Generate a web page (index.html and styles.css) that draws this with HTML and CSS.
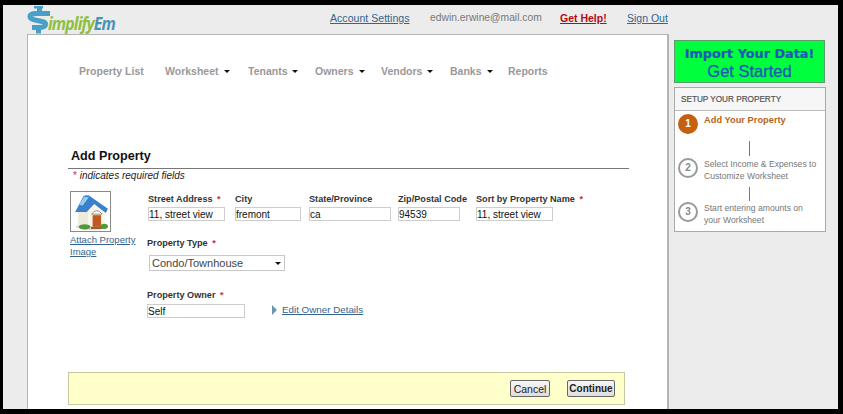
FILE: index.html
```html
<!DOCTYPE html>
<html lang="en">
<head>
<meta charset="utf-8">
<title>SimplifyEm - Add Property</title>
<link rel="stylesheet" href="styles.css">
</head>
<body>
<div class="frame">
  <header class="top">
    <div class="logo">
      <svg class="logo-mark" width="24" height="29" viewBox="0 0 24 29">
        <path d="M23 8.500 H9 Q3 8.500 3 11.500 Q3 14 8 15 L15 16.500 Q19.500 17.500 18.500 20 Q17.500 22.500 12 22.500 H5" fill="none" stroke="#4a9fc9" stroke-width="5"/>
        <rect x="10" y="1" width="5" height="7" fill="#4a9fc9"/>
        <rect x="9" y="23" width="5" height="5.500" fill="#4a9fc9"/>
        <rect x="7" y="1" width="9" height="2.500" fill="#4a9fc9"/>
      </svg>
      <span class="logo-text"><span class="logo-green">implify</span><span class="logo-blue">Em</span></span>
    </div>
    <nav class="account">
      <a class="link account-settings" href="#">Account Settings</a>
      <span class="email">edwin.erwine@mail.com</span>
      <a class="help" href="#">Get Help!</a>
      <a class="link signout" href="#">Sign Out</a>
    </nav>
  </header>
  <div class="columns">
    <main class="main">
      <ul class="menu">
        <li class="m-property">Property List</li>
        <li class="m-worksheet">Worksheet<i class="caret"></i></li>
        <li class="m-tenants">Tenants<i class="caret"></i></li>
        <li class="m-owners">Owners<i class="caret"></i></li>
        <li class="m-vendors">Vendors<i class="caret"></i></li>
        <li class="m-banks">Banks<i class="caret"></i></li>
        <li>Reports</li>
      </ul>
      <h1 class="title">Add Property</h1>
      <p class="required"><span class="star">*</span> indicates required fields</p>
      <form class="form">
        <div class="image-col">
          <div class="house-box">
            <svg width="36" height="36" viewBox="0 0 34 34">
              <ellipse cx="18" cy="31" rx="15" ry="3" fill="#d5d9d5"/>
              <path d="M5 15 L20 7 L30 16 V31 H5 Z" fill="#f8f5e8"/>
              <path d="M5 15 L14 15 L14 31 H5 Z" fill="#eeeadb"/>
              <path d="M2 17 L10 2 Q12 0.500 15 1.500 L33 14 L31 18 L20 9.500 L13 17 Z" fill="#3a80cc"/>
              <path d="M6 10 L10.500 2.500 L15 3 L9 11 Z" fill="#9acbf2"/>
              <rect x="18.500" y="20" width="8" height="11" fill="#c2581f"/>
              <rect x="17" y="31" width="11" height="2" fill="#9a5a30"/>
              <path d="M17.500 19 Q22.500 12.500 27.500 19 Z" fill="#fff" stroke="#8a7a60" stroke-width=".8"/>
              <ellipse cx="11" cy="31" rx="5.500" ry="2.500" fill="#4f9a35"/>
              <ellipse cx="29.500" cy="30.500" rx="3.500" ry="2.500" fill="#4f9a35"/>
            </svg>
          </div>
          <a class="link attach" href="#">Attach Property Image</a>
        </div>
        <div class="fields">
          <div class="row">
            <label class="field f-street"><span class="lab">Street Address <span class="star">*</span></span><input class="inp w-street" type="text" value="11, street view"></label>
            <label class="field f-city"><span class="lab">City</span><input class="inp w-city" type="text" value="fremont"></label>
            <label class="field f-state"><span class="lab">State/Province</span><input class="inp w-state" type="text" value="ca"></label>
            <label class="field f-zip"><span class="lab">Zip/Postal Code</span><input class="inp w-zip" type="text" value="94539"></label>
            <label class="field f-sort"><span class="lab">Sort by Property Name <span class="star">*</span></span><input class="inp w-sort" type="text" value="11, street view"></label>
          </div>
          <div class="type-block">
            <span class="lab">Property Type <span class="star">*</span></span>
            <div class="fake-select"><span>Condo/Townhouse</span><i class="caret sel-caret"></i></div>
          </div>
          <div class="owner-block">
            <span class="lab">Property Owner <span class="star">*</span></span>
            <div class="owner-row">
              <input class="inp w-owner" type="text" value="Self">
              <i class="tri"></i>
              <a class="link edit" href="#">Edit Owner Details</a>
            </div>
          </div>
        </div>
      </form>
      <div class="actions">
        <button class="btn btn-cancel" type="button">Cancel</button>
        <button class="btn btn-continue" type="button">Continue</button>
      </div>
    </main>
    <aside class="side">
      <div class="import">
        <div class="import-1">Import Your Data!</div>
        <div class="import-2">Get Started</div>
      </div>
      <section class="setup">
        <h2 class="setup-head">SETUP YOUR PROPERTY</h2>
        <div class="step step-1"><span class="num num-on">1</span><span class="step-on">Add Your Property</span></div>
        <div class="conn conn-1"></div>
        <div class="step step-2"><span class="num">2</span><span class="step-text">Select Income &amp; Expenses to Customize Worksheet</span></div>
        <div class="conn conn-2"></div>
        <div class="step step-3"><span class="num">3</span><span class="step-text">Start entering amounts on your Worksheet</span></div>
      </section>
    </aside>
  </div>
</div>
</body>
</html>
```
FILE: styles.css
```css
* { box-sizing: border-box; }
html, body { margin: 0; padding: 0; height: 414px; overflow: hidden; background: #000; }
body { padding: 5px 5px 5px 3px; font-family: "Liberation Sans", Arial, sans-serif; }
a { text-decoration: underline; }
.frame { height: 404px; background: #ececec; display: flex; flex-direction: column; overflow: hidden; }

.top { height: 29px; flex: none; display: flex; padding-left: 24px; }
.logo { display: flex; align-items: flex-start; width: 303px; }
.logo-mark { display: block; flex: none; }
.logo-text { font: italic bold 18px/20px "Open Sans", sans-serif; letter-spacing: -1px; margin: 8px 0 0 -3px; transform: scaleX(.88); transform-origin: left center; }
.logo-green { color: #8fbf3d; }
.logo-blue { color: #4a93b8; }
.account { display: flex; font-size: 10.600px; line-height: 14px; padding-top: 6px; }
.link { color: #34658f; }
.account-settings { width: 100px; }
.email { color: #777; width: 130px; font-size: 10.300px; }
.help { color: #b30b16; font-weight: bold; width: 67px; font-size: 10.500px; }
.signout { font-size: 10.500px; }

.columns { flex: 1; display: flex; min-height: 0; padding-left: 24px; }
.main { width: 642px; flex: none; background: #fff; border: 1px solid #b4b4b4; border-width: 1px 2px 0 1px; padding: 29px 0 0 40px; }
.menu { list-style: none; margin: 0; padding: 0 0 0 11px; display: flex; font-size: 10.500px; font-weight: bold; line-height: 14px; color: #999; }
.menu li { display: flex; align-items: center; white-space: nowrap; }
.m-property { width: 86px; }
.m-worksheet { width: 83px; }
.m-tenants { width: 67px; }
.m-owners { width: 66px; }
.m-vendors { width: 69px; }
.m-banks { width: 58px; }
.caret { display: inline-block; width: 0; height: 0; border: 3px solid transparent; border-top: 3.500px solid #111; border-bottom: 0; margin-left: 5px; }

.title { margin: 70px 0 0; padding: 0 0 3px 3px; font-size: 12.600px; line-height: 17px; font-weight: bold; color: #111; border-bottom: 1px solid #777; width: 561px; }
.required { margin: 0 0 0 5px; font-size: 10px; line-height: 14px; font-style: italic; color: #222; }
.star { color: #c33; font-style: normal; margin-left: 2px; }
.required .star { margin-left: 0; }

.form { display: flex; margin: 8px 0 0 2px; height: 181px; }
.image-col { width: 77px; flex: none; font-size: 9.500px; line-height: 12px; }
.house-box { width: 41px; height: 41px; border: 1px solid #8a8a8a; background: #fff; display: flex; align-items: center; justify-content: center; }
.attach { display: block; width: 72px; margin-top: 2px; }
.fields { padding-top: 1px; }
.row { display: flex; padding-left: 1px; }
.field { display: flex; flex-direction: column; }
.f-street { width: 87px; }
.f-city { width: 74px; }
.f-state { width: 89px; }
.f-zip { width: 78px; }
.lab { display: block; font-size: 9.150px; font-weight: bold; line-height: 14px; color: #333; white-space: nowrap; }
.inp { display: block; height: 14px; padding: 0; border: 1px solid #cdcdcd; background: #fff; font: 10px/12px "Liberation Sans", Arial, sans-serif; color: #111; margin-top: 1px; outline: 0; }
.w-street { width: 77px; }
.w-city { width: 66px; }
.w-state { width: 82px; }
.w-zip { width: 62px; }
.w-sort { width: 77px; }
.w-owner { width: 98px; margin-top: 2px; }

.type-block { margin-top: 15px; }
.fake-select { width: 136px; height: 16px; margin: 5px 0 0 2px; border: 1px solid #c8c8c8; background: #fff; display: flex; align-items: center; justify-content: space-between; padding: 0 3px 0 2px; font-size: 11px; color: #444; }
.sel-caret { margin: 0; }
.owner-block { margin-top: 17px; }
.owner-row { display: flex; align-items: center; }
.tri { width: 0; height: 0; border: 5px solid transparent; border-left: 5px solid #6f94b0; border-right: 0; margin-left: 27px; }
.edit { margin-left: 5px; font-size: 9.800px; line-height: 14px; }

.actions { width: 557px; height: 33px; background: #ffc; border: 1px solid #c8c8a0; display: flex; justify-content: flex-end; align-items: center; padding-right: 9px; gap: 17px; }
.btn { height: 17px; padding: 0; border: 1px solid #666; border-radius: 2px; background: linear-gradient(#f6f6f6, #dedede); font: 10.500px/14px "Liberation Sans", Arial, sans-serif; color: #222; }
.btn-cancel { width: 40px; }
.btn-continue { width: 48px; font-weight: bold; font-size: 10px; }

.side { width: 152px; margin-left: 5px; padding-top: 6px; flex: none; }
.import { height: 43px; width: 151px; background: #00ff3c; border: 1px solid #5c9c6c; text-align: center; color: #1c58b8; padding-top: 4px; }
.import-1 { font: bold 12.800px/17px "DejaVu Sans", sans-serif; white-space: nowrap; -webkit-text-stroke: .2px #1c58b8; }
.import-2 { font-size: 16.500px; line-height: 19px; -webkit-text-stroke: .3px #1c58b8; }
.setup { margin-top: 4px; height: 145px; background: #fff; border: 1px solid #aaa; }
.setup-head { margin: 0; height: 23px; background: #f6f6f6; border-bottom: 1px solid #bbb; font-size: 8.200px; line-height: 23px; font-weight: normal; color: #555; padding-left: 6px; -webkit-text-stroke: .2px #555; }
.step { display: flex; padding-left: 3px; font-size: 8.600px; line-height: 11.500px; }
.num { flex: none; width: 20px; height: 20px; border-radius: 50%; border: 2px solid #999; color: #888; display: flex; align-items: center; justify-content: center; font-size: 10px; font-weight: bold; margin-right: 6px; }
.num-on { background: #c4600e; border-color: #c4600e; color: #fff; }
.step-1 { height: 30px; padding-top: 3px; }
.step-on { color: #b8651a; font-weight: bold; font-size: 9.300px; line-height: 11px; padding-top: 1px; }
.step-text { color: #777; width: 116px; padding-top: 1px; }
.conn { width: 1px; background: #777; margin-left: 74px; }
.conn-1 { height: 15px; margin-bottom: 2px; }
.conn-2 { height: 14px; margin-top: 2px; margin-bottom: 1px; }
.step-2 { height: 27px; }
.step-3 { height: 27px; }
```
